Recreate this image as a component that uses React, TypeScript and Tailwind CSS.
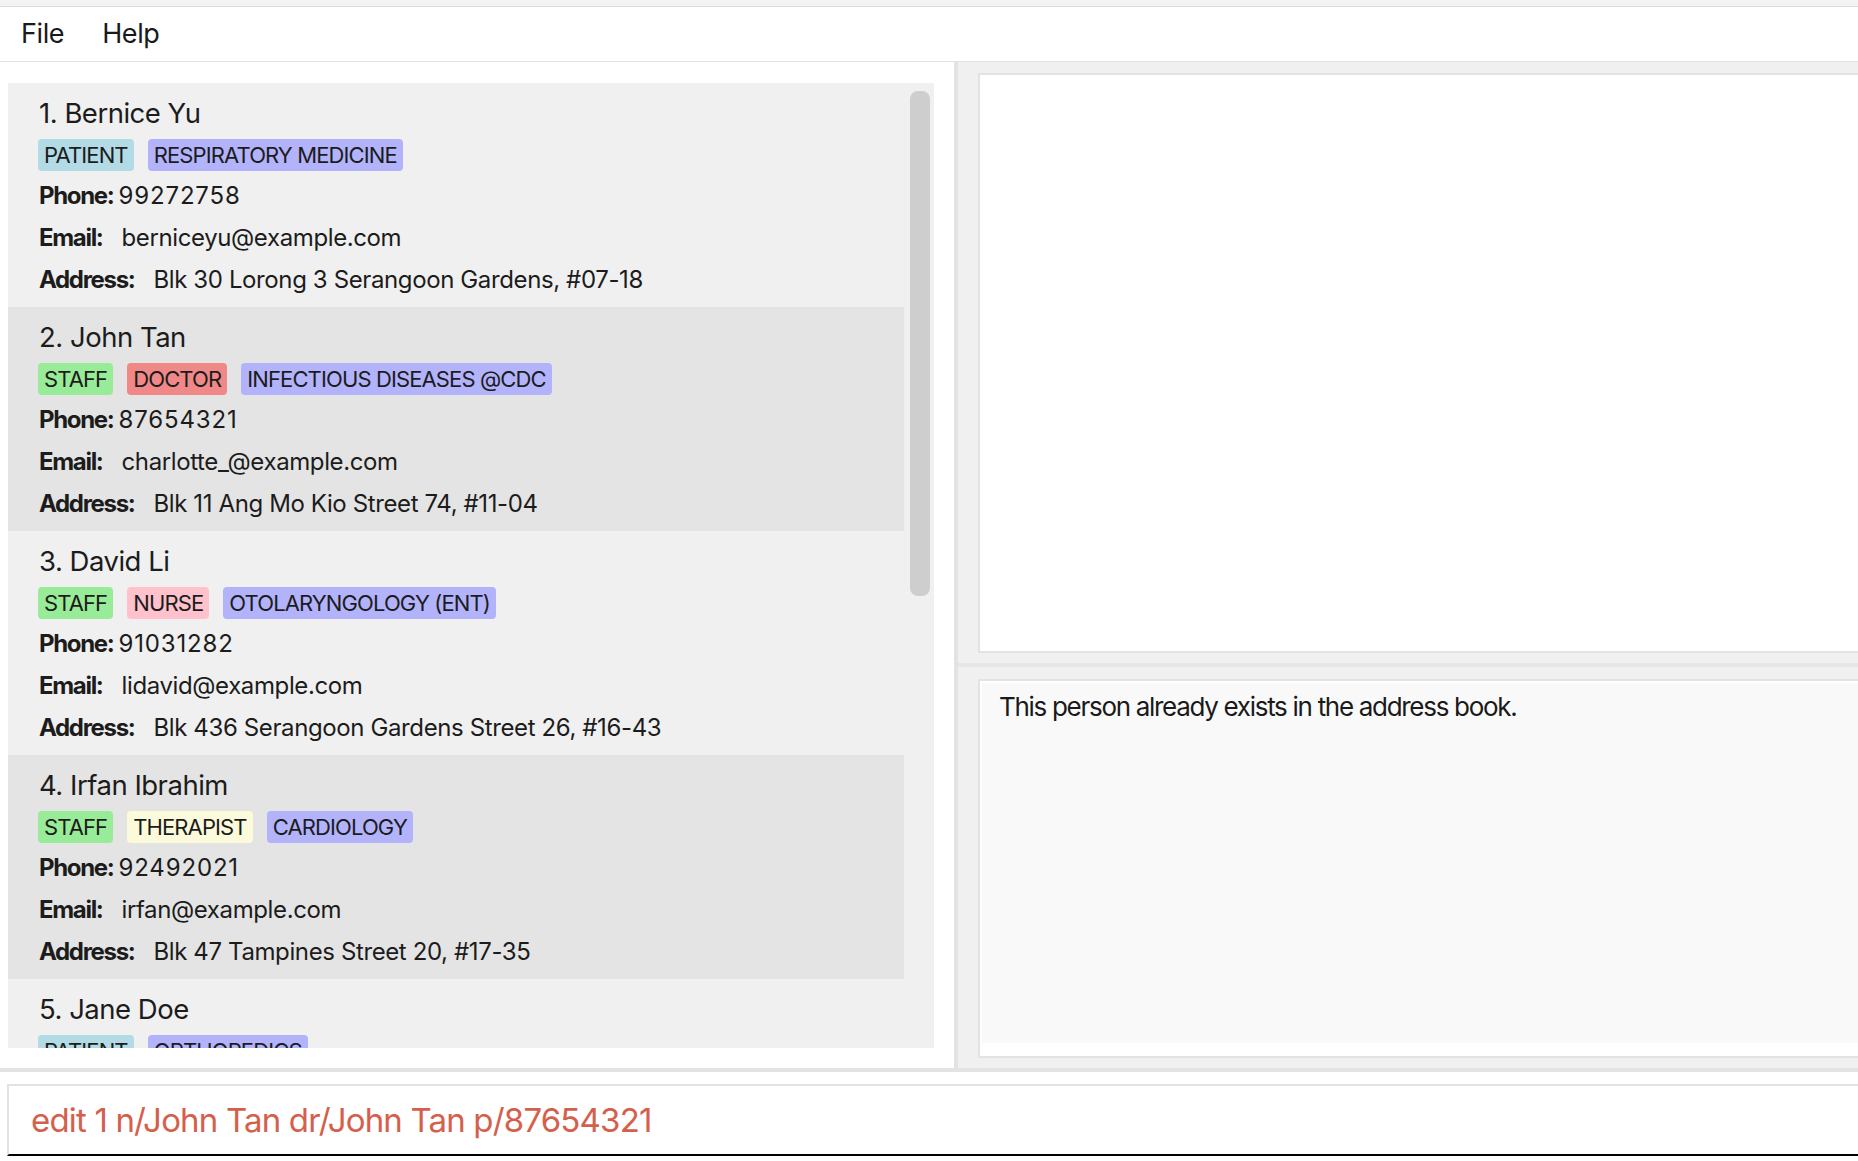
import React from "react";

type Tag = { label: string; kind: "patient" | "staff" | "doctor" | "nurse" | "therapist" | "spec" };

type Person = {
  name: string;
  tags: Tag[];
  phone?: string;
  email?: string;
  address?: string;
};

const tagColors: Record<Tag["kind"], string> = {
  patient: "bg-[#b2dbe6]",
  staff: "bg-[#98ec98]",
  doctor: "bg-[#f08888]",
  nurse: "bg-[#ffc2cc]",
  therapist: "bg-[#fbfbdc]",
  spec: "bg-[#b3b3fc]",
};

const persons: Person[] = [
  {
    name: "Bernice Yu",
    tags: [
      { label: "PATIENT", kind: "patient" },
      { label: "RESPIRATORY MEDICINE", kind: "spec" },
    ],
    phone: "99272758",
    email: "berniceyu@example.com",
    address: "Blk 30 Lorong 3 Serangoon Gardens, #07-18",
  },
  {
    name: "John Tan",
    tags: [
      { label: "STAFF", kind: "staff" },
      { label: "DOCTOR", kind: "doctor" },
      { label: "INFECTIOUS DISEASES @CDC", kind: "spec" },
    ],
    phone: "87654321",
    email: "charlotte_@example.com",
    address: "Blk 11 Ang Mo Kio Street 74, #11-04",
  },
  {
    name: "David Li",
    tags: [
      { label: "STAFF", kind: "staff" },
      { label: "NURSE", kind: "nurse" },
      { label: "OTOLARYNGOLOGY (ENT)", kind: "spec" },
    ],
    phone: "91031282",
    email: "lidavid@example.com",
    address: "Blk 436 Serangoon Gardens Street 26, #16-43",
  },
  {
    name: "Irfan Ibrahim",
    tags: [
      { label: "STAFF", kind: "staff" },
      { label: "THERAPIST", kind: "therapist" },
      { label: "CARDIOLOGY", kind: "spec" },
    ],
    phone: "92492021",
    email: "irfan@example.com",
    address: "Blk 47 Tampines Street 20, #17-35",
  },
  {
    // only the top of this card is in view
    name: "Jane Doe",
    tags: [
      { label: "PATIENT", kind: "patient" },
      { label: "ORTHOPEDICS", kind: "spec" },
    ],
  },
];

const PersonCard = ({ person, index }: { person: Person; index: number }) => {
  const even = index % 2 === 1;
  return (
    <div
      className={`h-[224px] shrink-0 w-[896px] pl-[31px] pt-[12px] ${
        even ? "bg-[#e4e4e4]" : "bg-[#f0f0f0]"
      }`}
    >
      <div className="text-[27.5px] leading-[36px] tracking-[-0.018em] text-[#1c1c1c]">
        {index + 1}. {person.name}
      </div>
      <div className="flex gap-[14px] mt-[8px] -ml-[1px]">
        {person.tags.map((t) => (
          <span
            key={t.label}
            className={`h-[32px] px-[6px] rounded-[4px] flex items-center text-[22px] tracking-[-0.04em] text-[#1c1c1c] ${tagColors[t.kind]}`}
          >
            {t.label}
          </span>
        ))}
      </div>
      {person.phone && (
        <div className="mt-[4px] text-[24px] leading-[42px] tracking-[-0.016em] text-[#1c1c1c]">
          <div className="flex">
            <span className="font-bold tracking-[-0.055em]">Phone:</span>
            <span className="ml-[5px] tracking-[0.035em]">{person.phone}</span>
          </div>
          <div className="flex">
            <span className="font-bold tracking-[-0.055em]">Email:</span>
            <span className="ml-[19px]">{person.email}</span>
          </div>
          <div className="flex">
            <span className="font-bold tracking-[-0.055em]">Address:</span>
            <span className="ml-[19px]">{person.address}</span>
          </div>
        </div>
      )}
    </div>
  );
};

export default function App() {
  return (
    <div className="w-[1858px] h-[1161px] overflow-hidden bg-white flex flex-col font-['Inter',sans-serif]">
      {/* window strip */}
      <div className="h-[7px] shrink-0 bg-[#f3f3f3] border-b border-[#dcdcdc]" />

      {/* menu bar */}
      <div className="h-[55px] shrink-0 flex items-center gap-[38px] pl-[21px] pt-[1px] border-b border-[#e3e3e3] text-[27px] tracking-[-0.015em] text-[#1a1a1a]">
        <span>File</span>
        <span>Help</span>
      </div>

      {/* main */}
      <div className="h-[1006px] shrink-0 flex">
        {/* person list */}
        <div className="w-[954px] shrink-0 bg-white pt-[21px] pl-[8px] pr-[20px] pb-[20px]">
          <div className="relative h-full bg-[#f0f0f0] overflow-hidden flex flex-col">
            {persons.map((p, i) => (
              <PersonCard key={p.name} person={p} index={i} />
            ))}
            <div className="absolute top-[8px] right-[4px] w-[20px] h-[505px] rounded-[8px] bg-[#cecece]" />
          </div>
        </div>

        <div className="w-[4px] shrink-0 bg-[#e3e3e3]" />

        {/* right side */}
        <div className="flex-1 bg-[#f0f0f0] flex flex-col">
          <div className="pt-[11px] pl-[20px]">
            <div className="h-[580px] bg-white border-2 border-r-0 border-[#e3e3e3]" />
          </div>
          <div className="h-[4px] bg-[#e6e6e6] mt-[10px]" />
          <div className="pt-[12px] pl-[20px]">
            <div className="h-[379px] bg-white border-2 border-r-0 border-[#e3e3e3] pt-[2px] pl-[2px] pb-[13px] flex flex-col">
              <div className="flex-1 bg-[#f9f9f9] pl-[17px] pt-[7px] text-[26px] leading-[34px] tracking-[-0.05em] text-[#1a1a1a]">
                This person already exists in the address book.
              </div>
            </div>
          </div>
        </div>
      </div>

      <div className="h-[4px] shrink-0 bg-[#e3e3e3]" />

      {/* command box */}
      <div className="flex-1 pt-[12px] pl-[7px]">
        <div className="h-[72px] border-t-2 border-l-2 border-[#e3e3e3] border-b-2 border-b-black pl-[22px] text-[33px] leading-[68px] tracking-[-0.025em] text-[#d4604c]">
          edit 1 n/John Tan dr/John Tan p/87654321
        </div>
      </div>
    </div>
  );
}
